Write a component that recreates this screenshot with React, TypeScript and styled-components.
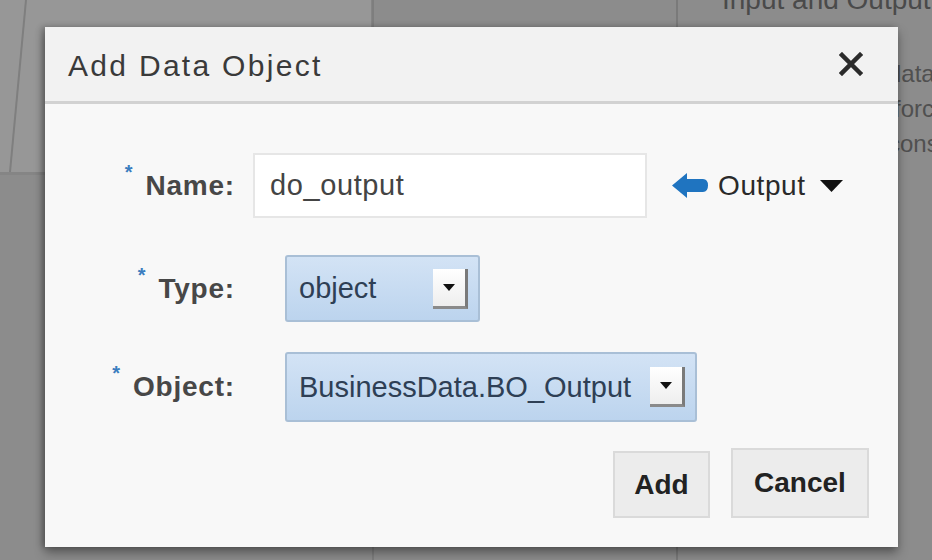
import React from "react";
import styled, { createGlobalStyle } from "styled-components";

const Global = createGlobalStyle`
  html, body { margin: 0; padding: 0; }
  body {
    width: 932px;
    height: 560px;
    overflow: hidden;
    background: #8c8c8c;
    font-family: "Liberation Sans", Arial, sans-serif;
  }
`;

const Page = styled.div`
  position: relative;
  width: 932px;
  height: 560px;
  overflow: hidden;
  display: flex;
  background: #8c8c8c;
`;

const LeftCol = styled.div`
  width: 372px;
  flex: none;
  border-right: 2px solid #7e7e7e;
  display: flex;
  flex-direction: column;
`;

const TopPanel = styled.div`
  position: relative;
  height: 172px;
  background: #979797;
  border-bottom: 3px solid #858585;
  border-right: 1px solid #858585;
`;

const Slant = styled.svg`
  position: absolute;
  left: 0;
  top: 0;
`;

const MidCol = styled.div`
  width: 302px;
  flex: none;
  border-right: 2px solid #7a7a7a;
`;

const RightCol = styled.div`
  flex: 1;
  padding-left: 44px;
  color: #505050;
  font-size: 24px;
  overflow: hidden;
  white-space: nowrap;
`;

const RightHeading = styled.div`
  margin-top: -16px;
  font-size: 28px;
  color: #4a4a4a;
`;

const RightLine = styled.div<{ $indent: number }>`
  padding-left: ${(p) => p.$indent}px;
  line-height: 35px;
`;

const RightText = styled.div`
  margin-top: 40px;
`;

const Dialog = styled.div`
  position: absolute;
  left: 45px;
  top: 27px;
  width: 853px;
  height: 520px;
  background: #f8f8f8;
  box-shadow: 0 6px 10px rgba(0, 0, 0, 0.35), -3px 0 6px rgba(0, 0, 0, 0.25);
  display: flex;
  flex-direction: column;
`;

const Header = styled.div`
  height: 74px;
  flex: none;
  background: #f2f2f2;
  border-bottom: 3px solid #d2d2d2;
  display: flex;
  align-items: center;
  justify-content: space-between;
  padding: 0 35px 0 23px;
`;

const Title = styled.div`
  font-size: 30px;
  letter-spacing: 2.3px;
  color: #3a3a3a;
  margin-top: 4px;
`;

const Body = styled.div`
  flex: 1;
  display: flex;
  flex-direction: column;
  padding-top: 49px;
`;

const Row = styled.div<{ $h: number; $mt: number }>`
  display: flex;
  align-items: center;
  height: ${(p) => p.$h}px;
  margin-top: ${(p) => p.$mt}px;
`;

const Label = styled.div`
  width: 190px;
  flex: none;
  display: flex;
  justify-content: flex-end;
  align-items: flex-start;
  font-weight: bold;
  font-size: 28px;
  letter-spacing: 0.8px;
  color: #474747;
`;

const Star = styled.span`
  color: #3b7dbf;
  font-size: 20px;
  font-weight: bold;
  margin-right: 12px;
  margin-top: -9px;
`;

const TextInput = styled.div`
  margin-left: 18px;
  width: 394px;
  height: 65px;
  box-sizing: border-box;
  background: #ffffff;
  border: 2px solid #e6e6e6;
  display: flex;
  align-items: center;
  padding-left: 15px;
  font-size: 29px;
  letter-spacing: 0.6px;
  color: #444;
`;

const Direction = styled.div`
  margin-left: 25px;
  display: flex;
  align-items: center;
  font-size: 28px;
  letter-spacing: 0.6px;
  color: #2a2a2a;
  gap: 10px;
`;

const Select = styled.div<{ $w: number; $h: number }>`
  margin-left: 50px;
  width: ${(p) => p.$w}px;
  height: ${(p) => p.$h}px;
  box-sizing: border-box;
  border: 2px solid #a9bfd6;
  border-radius: 3px;
  background: linear-gradient(#d3e3f5, #bcd4ee);
  display: flex;
  align-items: center;
  justify-content: space-between;
  padding: 0 10px 0 12px;
  font-size: 29px;
  color: #2e3f55;
`;

const DropBtn = styled.div`
  width: 35px;
  height: 40px;
  box-sizing: border-box;
  background: linear-gradient(#ffffff, #eeeeee);
  border-right: 3px solid #7a7a7a;
  border-bottom: 3px solid #8a8a8a;
  display: flex;
  align-items: center;
  justify-content: center;
`;

const Actions = styled.div`
  margin-top: 26px;
  display: flex;
  justify-content: flex-end;
  align-items: flex-end;
  gap: 21px;
  padding-right: 29px;
`;

const Button = styled.div<{ $w: number; $h: number }>`
  width: ${(p) => p.$w}px;
  height: ${(p) => p.$h}px;
  box-sizing: border-box;
  background: #ececec;
  border: 2px solid #dadada;
  display: flex;
  align-items: center;
  justify-content: center;
  font-weight: bold;
  font-size: 28px;
  color: #222;
`;

const Tri = () => (
  <svg width="12" height="7" viewBox="0 0 12 7">
    <polygon points="0,0 12,0 6,7" fill="#111" />
  </svg>
);

const Field = ({ label }: { label: string }) => (
  <Label>
    <Star>*</Star>
    {label}
  </Label>
);

export default function App() {
  return (
    <>
      <Global />
      <Page>
        <LeftCol>
          <TopPanel>
            <Slant width="40" height="172" viewBox="0 0 40 172">
              <line x1="26" y1="0" x2="10" y2="172" stroke="#7f7f7f" strokeWidth="2" />
            </Slant>
          </TopPanel>
        </LeftCol>
        <MidCol />
        <RightCol>
          <RightHeading>Input and Output</RightHeading>
          <RightText>
            <RightLine $indent={166}>data objects</RightLine>
            <RightLine $indent={172}>force the</RightLine>
            <RightLine $indent={166}>constants</RightLine>
          </RightText>
        </RightCol>

        <Dialog>
          <Header>
            <Title>Add Data Object</Title>
            <svg width="24" height="24" viewBox="0 0 24 24">
              <path d="M3 3 L21 21 M21 3 L3 21" stroke="#2b2b2b" strokeWidth="4.5" strokeLinecap="square" />
            </svg>
          </Header>
          <Body>
            <Row $h={65} $mt={0}>
              <Field label="Name:" />
              <TextInput>do_output</TextInput>
              <Direction>
                <svg width="36" height="25" viewBox="0 0 36 25">
                  <path
                    d="M0 12.5 L15 0 L15 6 L31 6 Q36 6 36 12.5 Q36 19 31 19 L15 19 L15 25 Z"
                    fill="#1f74c0"
                  />
                </svg>
                <span>Output</span>
                <svg width="23" height="12" viewBox="0 0 23 12" style={{ marginLeft: 4 }}>
                  <polygon points="0,0 23,0 11.5,12" fill="#111" />
                </svg>
              </Direction>
            </Row>
            <Row $h={67} $mt={37}>
              <Field label="Type:" />
              <Select $w={195} $h={67}>
                <span>object</span>
                <DropBtn>
                  <Tri />
                </DropBtn>
              </Select>
            </Row>
            <Row $h={70} $mt={30}>
              <Field label="Object:" />
              <Select $w={412} $h={70}>
                <span>BusinessData.BO_Output</span>
                <DropBtn>
                  <Tri />
                </DropBtn>
              </Select>
            </Row>
            <Actions>
              <Button $w={97} $h={67}>Add</Button>
              <Button $w={138} $h={70}>Cancel</Button>
            </Actions>
          </Body>
        </Dialog>
      </Page>
    </>
  );
}
